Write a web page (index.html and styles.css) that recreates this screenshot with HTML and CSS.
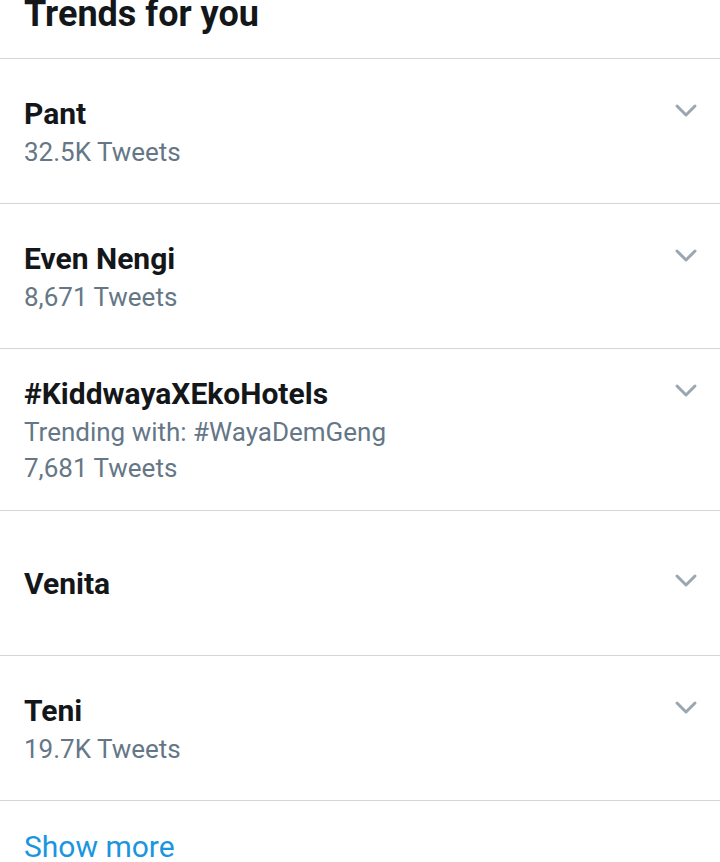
FILE: index.html
```html
<!DOCTYPE html>
<html>
<head>
<meta charset="utf-8">
<link rel="stylesheet" href="styles.css">
</head>
<body>
<div class="panel">
  <div class="header"><h2 class="header-title">Trends for you</h2></div>

  <div class="trend">
    <div class="trend-top">
      <span class="trend-name">Pant</span>
      <svg class="chev" viewBox="0 0 24 16"><path d="M3 3 L12 12 L21 3"/></svg>
    </div>
    <div class="trend-meta">32.5K Tweets</div>
  </div>

  <div class="trend">
    <div class="trend-top">
      <span class="trend-name">Even Nengi</span>
      <svg class="chev" viewBox="0 0 24 16"><path d="M3 3 L12 12 L21 3"/></svg>
    </div>
    <div class="trend-meta">8,671 Tweets</div>
  </div>

  <div class="trend">
    <div class="trend-top">
      <span class="trend-name">#KiddwayaXEkoHotels</span>
      <svg class="chev" viewBox="0 0 24 16"><path d="M3 3 L12 12 L21 3"/></svg>
    </div>
    <div class="trend-meta">Trending with: #WayaDemGeng</div>
    <div class="trend-meta">7,681 Tweets</div>
  </div>

  <div class="trend">
    <div class="trend-top">
      <span class="trend-name">Venita</span>
      <svg class="chev" viewBox="0 0 24 16"><path d="M3 3 L12 12 L21 3"/></svg>
    </div>
  </div>

  <div class="trend">
    <div class="trend-top">
      <span class="trend-name">Teni</span>
      <svg class="chev" viewBox="0 0 24 16"><path d="M3 3 L12 12 L21 3"/></svg>
    </div>
    <div class="trend-meta">19.7K Tweets</div>
  </div>

  <div class="footer"><a class="show-more" href="#">Show more</a></div>
</div>
</body>
</html>
```

FILE: styles.css
```css
html, body {
  margin: 0;
  padding: 0;
  background: #ffffff;
}
body {
  font-family: Roboto, "Noto Sans", Arial, sans-serif;
  color: #14171a;
  width: 720px;
  height: 862px;
  overflow: hidden;
}
.panel {
  display: flex;
  flex-direction: column;
}
.header {
  height: 58px;
  padding: 0 24px;
  border-bottom: 1px solid #d3d5dc;
  box-sizing: content-box;
}
.header-title {
  margin: 0;
  font-size: 36px;
  line-height: 28px;
  padding-top: 0;
  font-weight: 700;
  color: #14171a;
}
.trend {
  min-height: 145px;
  box-sizing: border-box;
  padding: 25px 24px 24px 24px;
  border-bottom: 1px solid #d3d5dc;
  display: flex;
  flex-direction: column;
  justify-content: center;
}
.trend-top {
  display: flex;
  align-items: center;
  justify-content: space-between;
  height: 40px;
}
.trend-name {
  font-size: 30px;
  line-height: 40px;
  font-weight: 700;
  color: #14171a;
}
.trend-meta {
  font-size: 26px;
  line-height: 36px;
  color: #657786;
}
.chev {
  width: 24px;
  height: 16px;
  margin-right: -2px;
  margin-top: -6px;
  fill: none;
  stroke: #9aa7b3;
  stroke-width: 3;
  stroke-linecap: round;
  stroke-linejoin: round;
}
.footer {
  padding: 28px 24px 0 24px;
}
.show-more {
  font-size: 30px;
  line-height: 36px;
  color: #1b95e0;
  text-decoration: none;
}
```
